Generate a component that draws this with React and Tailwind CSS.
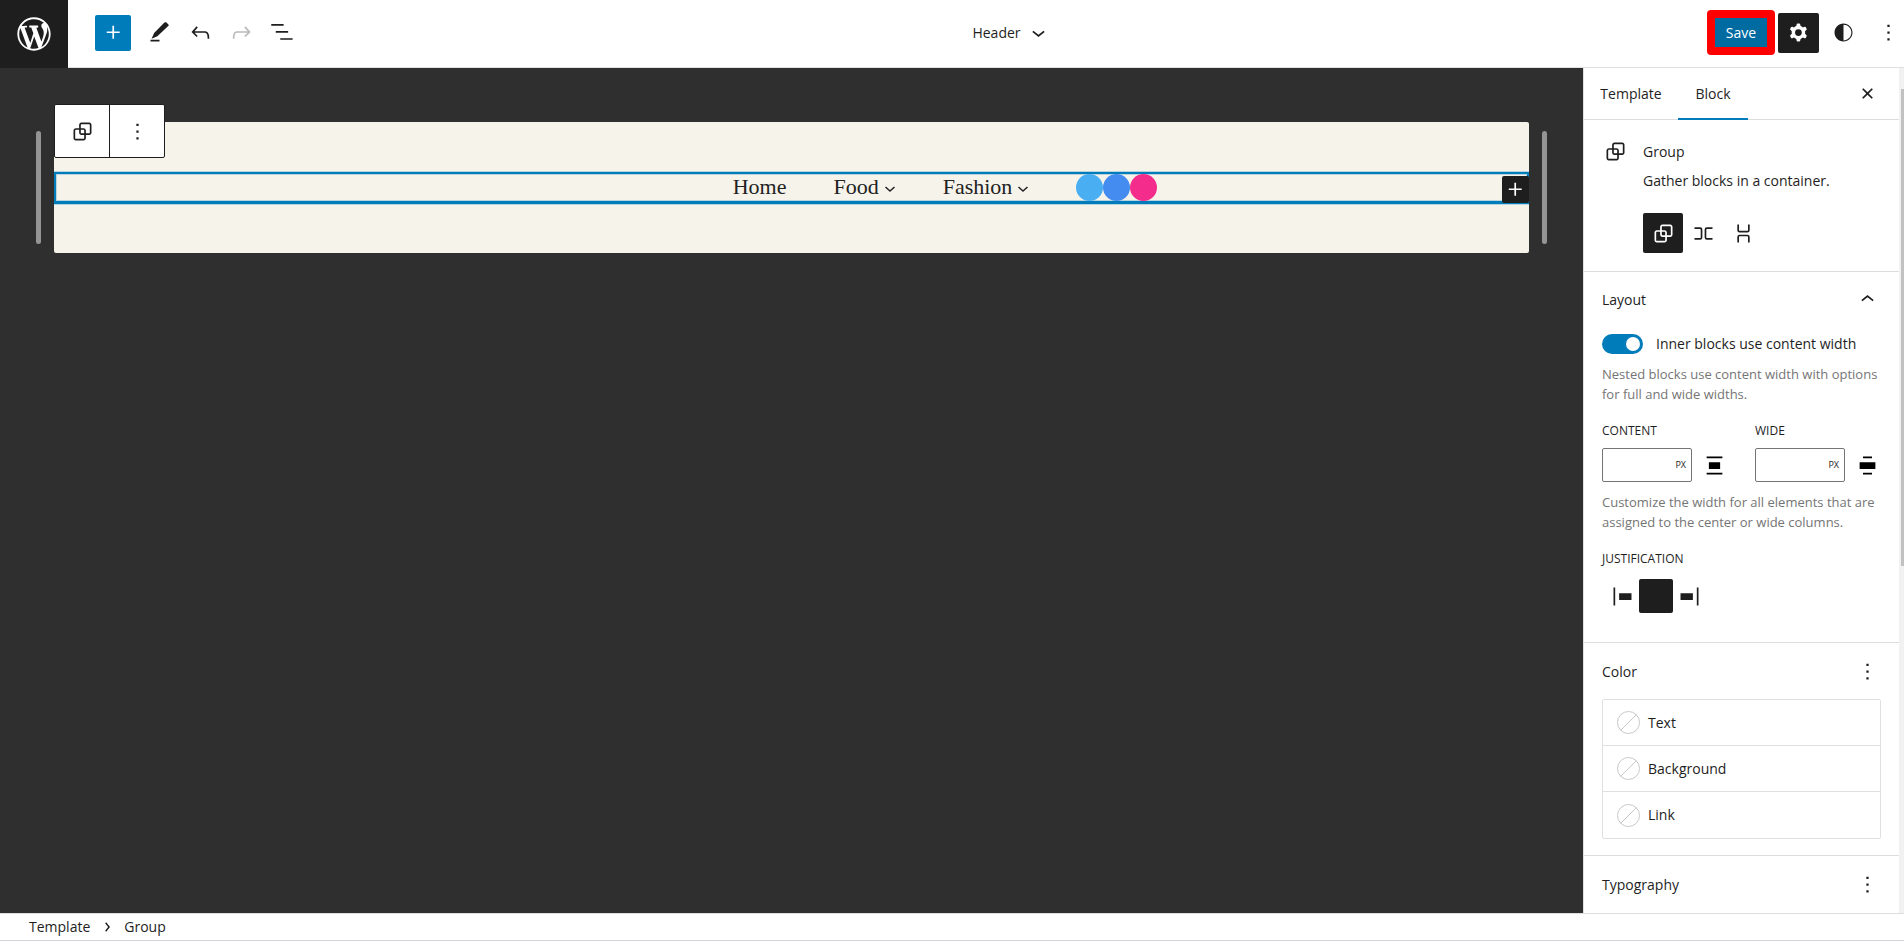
import { useState } from "react";

const PATHS = {
  plus: "M11 12.5V17.5H12.5V12.5H17.5V11H12.5V6H11V11H6V12.5H11Z",
  edit: "m20.100 5.100-1.900-1.900c-.5-.5-1.300-.5-1.800 0L7.200 12.400l-2.200 5.100 5.100-2.200 9.900-9.300c.3-.3.300-.7.100-.9ZM12 18.500H4V20h8v-1.500Z",
  undo: "M18.3 11.7c-.6-.6-1.4-.9-2.3-.9H6.7l2.9-3.3-1.1-1-4.5 5L8.5 16l1-1-2.7-2.7H16c.5 0 .9.2 1.3.5 1 1 1 3.4 1 4.5v.3h1.5v-.2c0-1.5 0-4.3-1.5-5.7z",
  redo: "M15.6 6.5l-1.1 1 2.9 3.3H8c-.9 0-1.7.3-2.3.9-1.4 1.5-1.4 4.2-1.4 5.6v.2h1.5v-.3c0-1.1 0-3.5 1-4.5.3-.3.7-.5 1.3-.5h9.2L14.5 15l1.1 1.1 4.6-4.6-4.6-5z",
  list: "M2 4.500h11V6H2V4.500Zm4 6.250h11v1.500H6v-1.500ZM21 17H10v1.500h11V17Z",
  chevronDown: "M17.5 11.6L12 16l-5.5-4.4.9-1.2L12 14l4.5-3.6 1 1.2z",
  chevronUp: "M6.5 12.4L12 8l5.5 4.4-.9 1.2L12 10l-4.5 3.6-1-1.2z",
  group: "M18 4h-7c-1.1 0-2 .9-2 2v3H6c-1.1 0-2 .9-2 2v7c0 1.1.9 2 2 2h7c1.1 0 2-.9 2-2v-3h3c1.1 0 2-.9 2-2V6c0-1.1-.9-2-2-2zm-4.5 14c0 .3-.2.5-.5.5H6c-.3 0-.5-.2-.5-.5v-7c0-.3.2-.5.5-.5h3V13c0 1.1.9 2 2 2h2.5v3zm0-4.5H11c-.3 0-.5-.2-.5-.5v-2.500H13c.3 0 .5.2.5.5v2.500zm5-.5c0 .3-.2.5-.5.5h-3V11c0-1.1-.9-2-2-2h-2.500V6c0-.3.2-.5.5-.5h7c.3 0 .5.2.5.5v7z",
  row: "M4 6.5h5a2 2 0 0 1 2 2v7a2 2 0 0 1-2 2H4V16h5a.5.5 0 0 0 .5-.5v-7A.5.5 0 0 0 9 8H4V6.5Zm16 0h-5a2 2 0 0 0-2 2v7a2 2 0 0 0 2 2h5V16h-5a.5.5 0 0 1-.5-.5v-7A.5.5 0 0 1 15 8h5V6.5Z",
  stack: "M17.5 4v5a2 2 0 0 1-2 2h-7a2 2 0 0 1-2-2V4H8v5a.5.5 0 0 0 .5.5h7A.5.5 0 0 0 16 9V4h1.5Zm0 16v-5a2 2 0 0 0-2-2h-7a2 2 0 0 0-2 2v5H8v-5a.5.5 0 0 1 .5-.5h7a.5.5 0 0 1 .5.5v5h1.5Z",
  more: "M13 19h-2v-2h2v2zm0-6h-2v-2h2v2zm0-6h-2V5h2v2z",
  close: "M12 13.06l3.712 3.713 1.061-1.06L13.061 12l3.712-3.712-1.06-1.06L12 10.938 8.288 7.227l-1.061 1.06L10.939 12l-3.712 3.712 1.06 1.061L12 13.061z",
  contrast: "M12 4c-4.4 0-8 3.6-8 8s3.600 8 8 8 8-3.600 8-8-3.600-8-8-8zm0 15V5c3.900 0 7 3.100 7 7s-3.100 7-7 7z",
  contentWidth: "M5 4h14v1.500H5V4ZM7 9h10v6H7V9ZM5 18.500h14V20H5v-1.500Z",
  wideWidth: "M8 4h8v1.500H8V4ZM5 9h14v6H5V9ZM8 18.500h8V20H8v-1.500Z",
  justifyLeft: "M4 4h1.500v16H4V4ZM9 9h11v6H9V9Z",
  justifyRight: "M4 9h11v6H4V9ZM18.500 4H20v16h-1.500V4Z",
  chevronRight: "M9.500 7l1.400-1.200L16 12l-5.100 6.200L9.500 17l4-5-4-5z",
  gear: "M10.289 4.836A1 1 0 0 1 11.275 4h1.306a1 1 0 0 1 .987.836l.244 1.466c.787.260 1.503.679 2.108 1.218l1.393-.522a1 1 0 0 1 1.216.437l.653 1.130a1 1 0 0 1-.230 1.273l-1.148.944a6.025 6.025 0 0 1 0 2.435l1.149.946a1 1 0 0 1 .230 1.272l-.653 1.130a1 1 0 0 1-1.216.437l-1.394-.522c-.605.540-1.320.958-2.108 1.218l-.244 1.466a1 1 0 0 1-.987.836h-1.306a1 1 0 0 1-.986-.836l-.244-1.466a5.995 5.995 0 0 1-2.108-1.218l-1.394.522a1 1 0 0 1-1.217-.436l-.653-1.131a1 1 0 0 1 .230-1.272l1.149-.946a6.026 6.026 0 0 1 0-2.435l-1.148-.944a1 1 0 0 1-.230-1.272l.653-1.131a1 1 0 0 1 1.217-.437l1.393.522a5.994 5.994 0 0 1 2.108-1.218l.244-1.466ZM14.929 12a3 3 0 1 1-6 0 3 3 0 0 1 6 0Z",
};

function Icon({ name, className = "size-[27px]" }) {
  return (
    <svg viewBox="0 0 24 24" className={`shrink-0 ${className}`} fill="currentColor" fillRule="evenodd" aria-hidden="true">
      <path d={PATHS[name]} />
    </svg>
  );
}

function WordPressLogo() {
  return (
    <svg viewBox="-2 -2 24 24" className="size-10" fill="currentColor" aria-hidden="true">
      <path d="M20 10c0-5.510-4.490-10-10-10C4.480 0 0 4.490 0 10c0 5.520 4.480 10 10 10 5.510 0 10-4.480 10-10zM7.780 15.370L4.370 6.220c.550-.020 1.170-.080 1.170-.080.500-.060.440-1.130-.060-1.110 0 0-1.450.110-2.370.110-.180 0-.370 0-.580-.010C4.120 2.690 6.870 1.110 10 1.110c2.330 0 4.450.870 6.050 2.340-.680-.110-1.650.390-1.650 1.580 0 .740.450 1.360.900 2.100.350.610.550 1.360.550 2.460 0 1.490-1.400 5-1.400 5l-3.030-8.370c.540-.020.820-.170.820-.170.500-.050.440-1.250-.060-1.220 0 0-1.440.120-2.380.120-.870 0-2.330-.120-2.330-.120-.500-.030-.560 1.200-.060 1.220l.920.080 1.260 3.410zM17.410 10c.240-.640.740-1.870.430-4.250.700 1.290 1.050 2.710 1.050 4.250 0 3.290-1.730 6.240-4.400 7.780.970-2.590 1.940-5.200 2.920-7.780zM6.100 18.090C3.120 16.650 1.110 13.530 1.110 10c0-1.300.230-2.480.720-3.590C3.250 10.300 4.670 14.200 6.100 18.090zm4.030-6.630l2.580 6.980c-.860.290-1.760.450-2.710.450-.790 0-1.570-.110-2.290-.330.810-2.380 1.620-4.740 2.420-7.100z" />
    </svg>
  );
}

function IconButton({ name, label, className = "size-[41px]" }) {
  return (
    <button type="button" aria-label={label} className={`flex shrink-0 items-center justify-center ${className}`}>
      <Icon name={name} />
    </button>
  );
}

function TopBar() {
  return (
    <header className="flex h-[68px] shrink-0 items-stretch bg-white">
      <a href="#dashboard" aria-label="Dashboard" className="flex w-[68px] items-center justify-center bg-[#1e1e1e] text-white">
        <WordPressLogo />
      </a>
      <div className="grid flex-1 grid-cols-[1fr_auto_1fr] items-center border-b border-[#e0e0e0] pb-0.5">
        <div className="flex items-center pl-[27px]">
          <IconButton name="plus" label="Add block" className="mr-2 size-9 rounded-xs bg-[#007cba] text-white" />
          <IconButton name="edit" label="Tools" />
          <IconButton name="undo" label="Undo" />
          <IconButton name="redo" label="Redo" className="size-[41px] text-[#bbb]" />
          <IconButton name="list" label="List view" className="h-[41px] w-10" />
        </div>
        <button type="button" className="flex items-center gap-1 pl-[52px]">
          Header
          <Icon name="chevronDown" />
        </button>
        <div className="flex items-center justify-end">
          <button type="button" className="mr-[3px] h-[45px] w-[68px] rounded-sm border-8 border-[#fe0000] bg-[#006ba1] text-white">
            Save
          </button>
          <IconButton name="gear" label="Settings" className="h-10 w-[41px] rounded-xs bg-[#1e1e1e] text-white" />
          <IconButton name="contrast" label="Styles" className="h-10 w-[49px]" />
          <IconButton name="more" label="Options" className="-mr-[5px] h-10 w-[41px]" />
        </div>
      </div>
    </header>
  );
}

function NavItem({ children, submenu }) {
  return (
    <a href="#nav" className="flex items-center gap-[5px] pb-0.5">
      {children}
      {submenu && (
        <svg viewBox="0 0 12 12" className="mt-1 size-3" fill="none" stroke="currentColor" strokeWidth="1.500" aria-hidden="true">
          <path d="M1.500 4L6 8l4.500-4" />
        </svg>
      )}
    </a>
  );
}

function ResizeHandle() {
  return <div className="mt-[9px] h-[113px] w-[5px] shrink-0 rounded-full bg-[#949494]" />;
}

function Canvas() {
  return (
    <main className="flex min-w-0 flex-1 items-start bg-[#2f2f2f] px-9 pt-[54px]">
      <ResizeHandle />
      <div className="relative mx-[13px] flex-1 rounded-xs bg-[#f6f3eb] pt-[50px] pb-[49px]">
        <div className="relative flex h-8 items-center border-2 border-b-3 border-[#007cba] shadow-[0_1px_0_#007cba40,0_-1px_0_#007cba40,inset_0_0_0_1px_#007cba40]">
          <nav className="ml-[46%] flex items-center gap-[47px] font-['Source_Serif_Pro','Liberation_Serif',serif] text-[22px] leading-none text-[#222]">
            <NavItem>Home</NavItem>
            <NavItem submenu>Food</NavItem>
            <NavItem submenu>Fashion</NavItem>
            <div className="flex">
              <span className="size-[27px] rounded-full bg-[#49aff2]" />
              <span className="size-[27px] rounded-full bg-[#448cf0]" />
              <span className="size-[27px] rounded-full bg-[#f42d8d]" />
            </div>
          </nav>
          <IconButton name="plus" label="Add block" className="absolute top-0.5 -right-0.5 size-[27px] rounded-xs bg-[#1e1e1e] text-white" />
        </div>
        <div className="absolute top-[-18px] left-0 flex h-[54px] divide-x divide-[#1e1e1e] rounded-xs border border-[#1e1e1e] bg-white">
          <IconButton name="group" label="Group" className="w-[55px]" />
          <IconButton name="more" label="Options" className="w-[54px]" />
        </div>
      </div>
      <ResizeHandle />
    </main>
  );
}

function WidthField({ id, label, icon }) {
  return (
    <div>
      <label htmlFor={id} className="block text-[12px] leading-4 font-medium uppercase">{label}</label>
      <div className="mt-[9px] flex items-center gap-[9px]">
        <div className="flex h-[34px] w-[90px] items-center rounded-xs border border-[#757575] pr-[5px]">
          <input id={id} type="text" className="h-full min-w-0 flex-1 px-2 outline-none" />
          <span className="text-[9px] text-[#1e1e1e]">PX</span>
        </div>
        <Icon name={icon} className="size-[27px] text-black" />
      </div>
    </div>
  );
}

function ColorRow({ label }) {
  return (
    <button type="button" className="flex h-[46px] w-full items-center gap-2 px-3.5 text-left">
      <svg viewBox="0 0 23 23" className="size-[23px]" fill="none" stroke="#c8c8c8" aria-hidden="true">
        <circle cx="11.500" cy="11.500" r="11" />
        <path d="M3.500 19.500l16-16" />
      </svg>
      {label}
    </button>
  );
}

function PanelTitle({ children, icon, label }) {
  return (
    <div className="flex h-[55px] items-center justify-between">
      <h2 className="pt-px font-medium">{children}</h2>
      <button type="button" aria-label={label}><Icon name={icon} /></button>
    </div>
  );
}

function Sidebar() {
  const [inner, setInner] = useState(true);
  return (
    <aside className="flex w-[321px] shrink-0 overflow-hidden border-l border-[#e0e0e0] bg-white">
      <div className="min-w-0 flex-1">
        <div className="flex h-[52px] items-stretch border-b border-[#ddd]">
          <button type="button" className="w-[94px] font-medium">Template</button>
          <button type="button" className="-mb-px w-[70px] border-y-2 border-t-transparent border-b-[#007cba] font-medium">Block</button>
          <IconButton name="close" label="Close" className="mr-[18px] ml-auto" />
        </div>

        <section className="flex gap-3.5 border-b border-[#ddd] px-[18px] pt-[18px] pb-[18px]">
          <Icon name="group" />
          <div>
            <h2 className="leading-7 font-medium">Group</h2>
            <p className="mt-[3px] leading-6">Gather blocks in a container.</p>
            <div className="mt-5 flex">
              <IconButton name="group" label="Group" className="size-10 rounded-xs bg-[#1e1e1e] text-white" />
              <IconButton name="row" label="Row" className="size-10" />
              <IconButton name="stack" label="Stack" className="size-10" />
            </div>
          </div>
        </section>

        <section className="border-b border-[#ddd] px-[18px] pb-[29px]">
          <PanelTitle icon="chevronUp" label="Collapse layout">Layout</PanelTitle>
          <label className="mt-[7px] flex h-5 items-center gap-[13px]">
            <input type="checkbox" role="switch" checked={inner} onChange={() => setInner(!inner)} className="peer sr-only" />
            <span className="flex h-5 w-[41px] items-center rounded-full bg-[#949494] p-[3px] peer-checked:justify-end peer-checked:bg-[#007cba]">
              <span className="size-3.5 rounded-full bg-white" />
            </span>
            Inner blocks use content width
          </label>
          <p className="mt-2.5 text-[13px] leading-5 text-[#757575]">Nested blocks use content width with options for full and wide widths.</p>
          <div className="mt-[19px] flex gap-[27px]">
            <WidthField id="content-width" label="Content" icon="contentWidth" />
            <WidthField id="wide-width" label="Wide" icon="wideWidth" />
          </div>
          <p className="mt-2.5 text-[13px] leading-5 text-[#757575]">Customize the width for all elements that are assigned to the center or wide columns.</p>
          <h3 className="mt-[19px] text-[12px] leading-4 font-medium uppercase">Justification</h3>
          <div className="mt-3 flex pl-[3px]">
            <IconButton name="justifyLeft" label="Justify left" className="size-[34px]" />
            <button type="button" aria-label="Justify center" className="size-[34px] rounded-xs bg-[#1e1e1e]" />
            <IconButton name="justifyRight" label="Justify right" className="h-[34px] w-8" />
          </div>
        </section>

        <section className="border-b border-[#ddd] px-[18px] pt-px pb-4">
          <PanelTitle icon="more" label="Color options">Color</PanelTitle>
          <div className="divide-y divide-[#e0e0e0] rounded-xs border border-[#e0e0e0]">
            <ColorRow label="Text" />
            <ColorRow label="Background" />
            <ColorRow label="Link" />
          </div>
        </section>

        <section className="px-[18px] pt-px">
          <PanelTitle icon="more" label="Typography options">Typography</PanelTitle>
        </section>
      </div>
      <div className="w-[5px] shrink-0 bg-[#f1f1f1] pt-[21px] pl-0.5">
        <div className="h-[477px] bg-[#c1c1c1]" />
      </div>
    </aside>
  );
}

export default function App() {
  return (
    <div className="flex h-screen flex-col overflow-hidden bg-white font-['Segoe_UI','Open_Sans',sans-serif] text-[14px] leading-5 text-[#1e1e1e]">
      <TopBar />
      <div className="flex min-h-0 flex-1">
        <Canvas />
        <Sidebar />
      </div>
      <footer className="flex h-7 shrink-0 items-center gap-2 border-t border-b border-t-[#ddd] border-b-[#d3d3da] pl-[29px]">
        <a href="#template">Template</a>
        <Icon name="chevronRight" className="size-[18px]" />
        <a href="#group">Group</a>
      </footer>
    </div>
  );
}
